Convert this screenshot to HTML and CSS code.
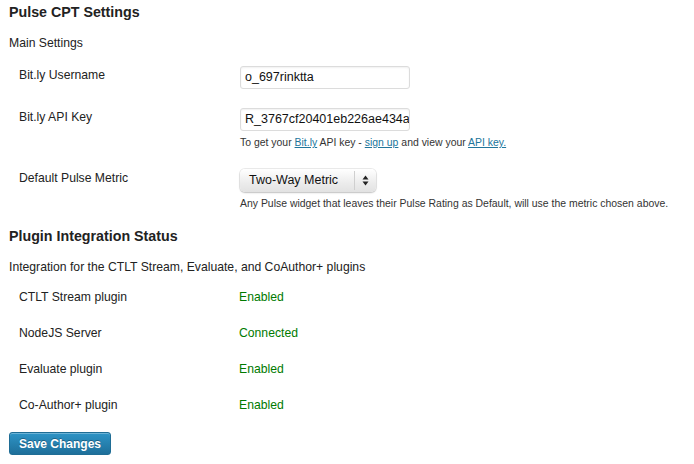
FILE: index.html
```html
<!DOCTYPE html>
<html>
<head>
<meta charset="utf-8">
<link rel="stylesheet" href="styles.css">
</head>
<body>
<div class="wrap">
  <h3 class="title first">Pulse CPT Settings</h3>
  <p class="intro main">Main Settings</p>
  <div class="form-table">
    <div class="row">
      <div class="label">Bit.ly Username</div>
      <div class="field"><div class="input">o_697rinktta</div></div>
    </div>
    <div class="row">
      <div class="label">Bit.ly API Key</div>
      <div class="field">
        <div class="input">R_3767cf20401eb226ae434a</div>
        <p class="description">To get your <a href="#">Bit.ly</a> API key - <a href="#">sign up</a> and view your <a href="#">API key.</a></p>
      </div>
    </div>
    <div class="row">
      <div class="label">Default Pulse Metric</div>
      <div class="field">
        <div class="select"><span class="select-text">Two-Way Metric</span><span class="select-arrows"><svg width="7" height="11" viewBox="0 0 7 11"><path d="M3.5 0.5 L6.5 4.5 L0.5 4.5 Z M3.5 10.5 L6.5 6.5 L0.5 6.5 Z" fill="#222"/></svg></span></div>
        <p class="description">Any Pulse widget that leaves their Pulse Rating as Default, will use the metric chosen above.</p>
      </div>
    </div>
  </div>
  <h3 class="title second">Plugin Integration Status</h3>
  <p class="intro integ">Integration for the CTLT Stream, Evaluate, and CoAuthor+ plugins</p>
  <div class="status-table">
    <div class="srow"><div class="label">CTLT Stream plugin</div><div class="status">Enabled</div></div>
    <div class="srow"><div class="label">NodeJS Server</div><div class="status">Connected</div></div>
    <div class="srow"><div class="label">Evaluate plugin</div><div class="status">Enabled</div></div>
    <div class="srow"><div class="label">Co-Author+ plugin</div><div class="status">Enabled</div></div>
  </div>
  <button class="button-primary">Save Changes</button>
</div>
</body>
</html>
```
FILE: styles.css
```css
html, body {
  margin: 0;
  padding: 0;
  background: #fff;
}
body {
  font-family: "Liberation Sans", Arial, Helvetica, sans-serif;
  font-size: 12.2px;
  color: #222;
}
.wrap {
  padding-left: 9px;
}
.title {
  margin: 0;
  font-size: 14.25px;
  font-weight: bold;
  line-height: 18px;
  color: #222;
}
.title.first {
  padding-top: 3px;
}
.title.second {
  margin-top: 5px;
}
.intro {
  margin: 0;
  line-height: 16px;
}
.intro.main {
  margin-top: 14px;
  margin-bottom: 7px;
}
.intro.integ {
  margin-top: 14px;
  margin-bottom: 6px;
}
.row {
  display: grid;
  grid-template-columns: 231px 1fr;
  padding: 8px 0 11px;
}
.row .label {
  padding-top: 1px;
}
.label {
  padding-left: 10px;
  line-height: 16px;
}
.input {
  box-sizing: border-box;
  width: 170px;
  height: 23px;
  border: 1px solid #dcdcdc;
  border-radius: 3px;
  box-shadow: inset 0 1px 2px rgba(0,0,0,0.06);
  padding: 0 4px;
  font-size: 12.5px;
  line-height: 21px;
  color: #111;
  white-space: nowrap;
  overflow: hidden;
}
.description {
  margin: 4px 0 0;
  font-size: 10.45px;
  line-height: 15px;
  color: #333;
}
.description a {
  color: #21759b;
  text-decoration: underline;
}
.select {
  box-sizing: border-box;
  display: flex;
  width: 136px;
  height: 23px;
  border-radius: 5px;
  background: linear-gradient(#ffffff, #ececec 60%, #e2e2e2);
  box-shadow: 0 0 0 1px rgba(0,0,0,0.08), 0 1px 2px rgba(0,0,0,0.18);
  font-size: 12.5px;
  line-height: 23px;
  color: #111;
}
.select-text {
  flex: 1;
  padding-left: 9px;
  border-right: 1px solid #cfcfcf;
  margin: 2px 0;
  line-height: 19px;
}
.select-arrows {
  width: 21px;
  display: flex;
  align-items: center;
  justify-content: center;
}
.select-arrows svg {
  display: block;
}
.srow {
  display: grid;
  grid-template-columns: 230px 1fr;
  height: 36px;
  box-sizing: border-box;
  padding-top: 8px;
}
.status {
  line-height: 16px;
  color: #007a00;
}
.button-primary {
  margin-top: 7px;
  box-sizing: border-box;
  width: 102px;
  height: 23px;
  border: 1px solid #1f6d95;
  border-radius: 3px;
  background: linear-gradient(#2e94c6, #1e6f9a);
  color: #fff;
  font-family: "Liberation Sans", Arial, sans-serif;
  font-size: 12px;
  font-weight: bold;
  text-shadow: 0 -1px 0 rgba(0,0,0,0.3);
  padding: 0;
  box-shadow: inset 0 1px 0 rgba(255,255,255,0.3);
}
```
